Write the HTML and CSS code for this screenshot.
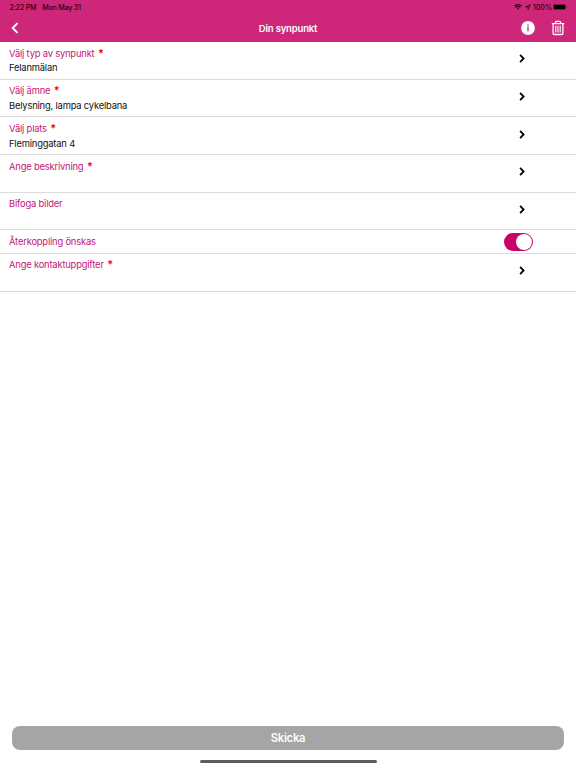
FILE: index.html
```html
<!DOCTYPE html>
<html lang="sv">
<head>
    <meta charset="UTF-8">
    <meta name="viewport" content="width=device-width, initial-scale=1.0">
    <title>Din synpunkt</title>
    <link rel="stylesheet" href="styles.css">
</head>
<body>
    <header>
        <div class="status-bar">
            <span class="time">2:22 PM</span>
            <span class="date">Mon May 31</span>
            <div class="status-icons">
                <svg width="8" height="6" viewBox="0 0 8 6" fill="none" stroke="#1d0612" stroke-width="1.2">
                    <path d="M0.4 2.2C2.4 0.1 5.6 0.1 7.6 2.2M1.7 3.6C3 2.3 5 2.3 6.3 3.6"/>
                    <path d="M2.9 4.5Q4 3.7 5.1 4.5L4 5.8Z" fill="#1d0612" stroke="none"/>
                </svg>
                <svg class="location" width="6" height="6" viewBox="0 0 6 6" fill="none" stroke="#1d0612" stroke-width="0.8">
                    <path d="M5.3 0.7L0.7 2.9H3.1V5.3Z"/>
                </svg>
                <span class="battery-text">100%</span>
                <svg class="battery" width="15" height="6" viewBox="0 0 15 6">
                    <rect x="0.3" y="0.3" width="12.4" height="5.4" rx="1.5" fill="none" stroke="#1d0612" stroke-opacity="0.5" stroke-width="0.5"/>
                    <rect x="0.8" y="0.7" width="11.4" height="4.6" rx="1" fill="#000"/>
                    <path d="M13.4 2V4Q14.2 3.6 14.2 3T13.4 2Z" fill="#1d0612" fill-opacity="0.5"/>
                </svg>
            </div>
        </div>
        <div class="nav-bar">
            <button class="back" aria-label="Tillbaka">
                <svg width="8" height="12" viewBox="0 0 8 12" fill="none" stroke="#fff" stroke-width="1.9">
                    <path d="M6.5 1.2L1.7 6L6.5 10.8"/>
                </svg>
            </button>
            <h1>Din synpunkt</h1>
            <div class="actions">
                <button aria-label="Information">
                    <svg width="14" height="14" viewBox="0 0 14 14">
                        <circle cx="7" cy="7" r="6.9" fill="#fff"/>
                        <circle cx="7" cy="4.1" r="0.8" fill="#ce2679"/>
                        <path d="M7 5.6V10.4" stroke="#ce2679" stroke-width="1.3"/>
                    </svg>
                </button>
                <button aria-label="Ta bort">
                    <svg width="14" height="16" viewBox="0 0 14 16" fill="none" stroke="#fff" stroke-width="1.3">
                        <path d="M0.8 3.6H13.2M4.4 3.4V2.4Q4.4 1.4 5.4 1.4H8.6Q9.6 1.4 9.6 2.4V3.4"/>
                        <path d="M2.1 3.8V13.4Q2.1 14.5 3.2 14.5H10.8Q11.9 14.5 11.9 13.4V3.8"/>
                        <path d="M4.8 5.8V12.6M7 5.8V12.6M9.2 5.8V12.6" stroke-width="1.1"/>
                    </svg>
                </button>
            </div>
        </div>
    </header>

    <main>
        <div class="row">
            <div class="text">
                <div class="label">Välj typ av synpunkt <span class="required">*</span></div>
                <div class="value">Felanmälan</div>
            </div>
            <svg class="chevron" viewBox="0 0 6 9"><path d="M1.1 0.9L4.6 4.5L1.1 8.1"/></svg>
        </div>
        <div class="row">
            <div class="text">
                <div class="label">Välj ämne <span class="required">*</span></div>
                <div class="value">Belysning, lampa cykelbana</div>
            </div>
            <svg class="chevron" viewBox="0 0 6 9"><path d="M1.1 0.9L4.6 4.5L1.1 8.1"/></svg>
        </div>
        <div class="row">
            <div class="text">
                <div class="label">Välj plats <span class="required">*</span></div>
                <div class="value">Fleminggatan 4</div>
            </div>
            <svg class="chevron" viewBox="0 0 6 9"><path d="M1.1 0.9L4.6 4.5L1.1 8.1"/></svg>
        </div>
        <div class="row">
            <div class="text">
                <div class="label">Ange beskrivning <span class="required">*</span></div>
            </div>
            <svg class="chevron" viewBox="0 0 6 9"><path d="M1.1 0.9L4.6 4.5L1.1 8.1"/></svg>
        </div>
        <div class="row">
            <div class="text">
                <div class="label">Bifoga bilder</div>
            </div>
            <svg class="chevron" viewBox="0 0 6 9"><path d="M1.1 0.9L4.6 4.5L1.1 8.1"/></svg>
        </div>
        <div class="row toggle-row">
            <div class="text">
                <div class="label">Återkoppling önskas</div>
            </div>
            <div class="toggle"><div class="knob"></div></div>
        </div>
        <div class="row">
            <div class="text">
                <div class="label">Ange kontaktuppgifter <span class="required">*</span></div>
            </div>
            <svg class="chevron" viewBox="0 0 6 9"><path d="M1.1 0.9L4.6 4.5L1.1 8.1"/></svg>
        </div>
    </main>

    <footer>
        <button class="send">Skicka</button>
        <div class="home-indicator"></div>
    </footer>
</body>
</html>
```
FILE: styles.css
```css
body {
    font-family: Inter, "Liberation Sans", sans-serif;
    margin: 0;
    display: flex;
    flex-direction: column;
    height: 100vh;
    background-color: #fff;
}
button {
    display: flex;
    padding: 0;
    border: none;
    background: none;
    font-family: inherit;
    cursor: pointer;
}
svg {
    display: block;
}
header {
    height: 42px;
    background-color: #ce2679;
}
.status-bar {
    display: flex;
    align-items: center;
    height: 14px;
    padding: 0 8px 0 9.5px;
    font-size: 7.1px;
    font-weight: 500;
    letter-spacing: -0.15px;
    color: #1d0612;
}
.time {
    letter-spacing: -0.2px;
}
.date {
    margin-left: 6px;
    letter-spacing: -0.22px;
}
.status-icons {
    display: flex;
    align-items: center;
    margin-left: auto;
}
.location {
    margin-left: 3px;
}
.battery-text {
    margin-left: 2px;
    letter-spacing: 0;
}
.battery {
    margin-left: 1px;
}
.nav-bar {
    display: grid;
    grid-template-columns: 1fr auto 1fr;
    align-items: center;
    height: 28px;
    padding: 0 11px;
}
h1 {
    margin: 0;
    font-size: 9.5px;
    font-weight: 600;
    letter-spacing: -0.17px;
    color: #fff;
}
.actions {
    display: flex;
    align-items: center;
    justify-content: flex-end;
    gap: 16px;
}
.row {
    display: flex;
    align-items: center;
    box-sizing: border-box;
    height: 37.7px;
    padding: 0 43px 0 9px;
    border-bottom: 1px solid #dcdcdc;
}
.text {
    flex-grow: 1;
    align-self: flex-start;
    padding-top: 4.6px;
}
.label, .value {
    height: 14.6px;
    font-size: 9.4px;
    line-height: 14.6px;
    letter-spacing: -0.19px;
    color: #c4157a;
}
.value {
    color: #111;
}
.required {
    margin-left: 1px;
    font-size: 11px;
    font-weight: 600;
    line-height: 1;
    color: #f00;
}
.chevron {
    width: 6px;
    height: 9px;
    margin: -3px 8px 0 0;
    fill: none;
    stroke: #000;
    stroke-width: 1.8;
}
.toggle-row {
    height: 23.4px;
}
.toggle {
    display: flex;
    justify-content: flex-end;
    box-sizing: border-box;
    width: 29px;
    height: 18px;
    padding: 1px;
    border-radius: 9px;
    background-color: #c8006a;
}
.knob {
    width: 16px;
    height: 16px;
    border-radius: 50%;
    background-color: #fff;
}
footer {
    display: flex;
    flex-direction: column;
    align-items: center;
    margin-top: auto;
    padding: 0 12px 5px;
}
.send {
    align-items: center;
    justify-content: center;
    width: 100%;
    height: 24px;
    border-radius: 8px;
    background-color: #a5a5a5;
    font-size: 11.2px;
    font-weight: 600;
    letter-spacing: -0.25px;
    color: #fff;
}
.home-indicator {
    width: 177px;
    height: 3px;
    margin-top: 10px;
    border-radius: 2px;
    background-color: #5c5c5c;
}
```
